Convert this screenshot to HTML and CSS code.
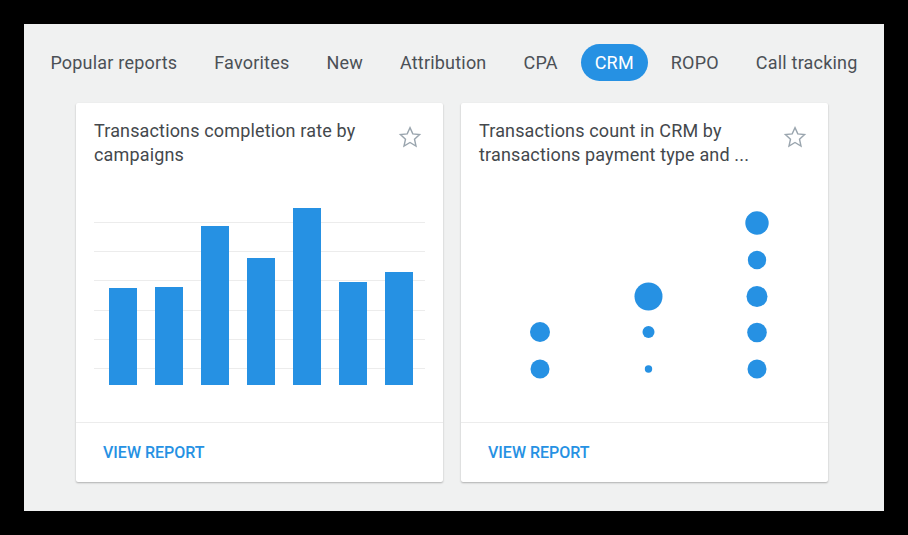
FILE: index.html
```html
<!DOCTYPE html>
<html>
<head>
<meta charset="utf-8">
<link rel="stylesheet" href="styles.css">
</head>
<body>
<div class="frame">
  <nav class="tabs">
    <span class="tab">Popular reports</span>
    <span class="tab">Favorites</span>
    <span class="tab">New</span>
    <span class="tab">Attribution</span>
    <span class="tab">CPA</span>
    <span class="tab active">CRM</span>
    <span class="tab">ROPO</span>
    <span class="tab">Call tracking</span>
  </nav>
  <div class="cards">
    <div class="card">
      <div class="card-head">
        <div class="title">Transactions completion rate by campaigns</div>
        <svg class="star" viewBox="0 0 24 24"><polygon points="12,2.6 14.8,8.9 21.6,9.6 16.5,14.2 18,21 12,17.5 6,21 7.5,14.2 2.4,9.6 9.2,8.9"/></svg>
      </div>
      <svg class="chart" viewBox="0 0 367 255">
        <g class="grid">
          <line x1="18" x2="349" y1="55.5" y2="55.5"/>
          <line x1="18" x2="349" y1="84.5" y2="84.5"/>
          <line x1="18" x2="349" y1="113.5" y2="113.5"/>
          <line x1="18" x2="349" y1="143.5" y2="143.5"/>
          <line x1="18" x2="349" y1="172.5" y2="172.5"/>
          <line x1="18" x2="349" y1="201.5" y2="201.5"/>
        </g>
        <g class="bars">
          <rect x="33" y="121" width="28" height="97"/>
          <rect x="79" y="120" width="28" height="98"/>
          <rect x="125" y="59" width="28" height="159"/>
          <rect x="171" y="91" width="28" height="127"/>
          <rect x="217" y="41" width="28" height="177"/>
          <rect x="263" y="115" width="28" height="103"/>
          <rect x="309" y="105" width="28" height="113"/>
        </g>
      </svg>
      <div class="card-foot"><span class="link">VIEW REPORT</span></div>
    </div>
    <div class="card">
      <div class="card-head">
        <div class="title">Transactions count in CRM by transactions payment type and ...</div>
        <svg class="star" viewBox="0 0 24 24"><polygon points="12,2.6 14.8,8.9 21.6,9.6 16.5,14.2 18,21 12,17.5 6,21 7.5,14.2 2.4,9.6 9.2,8.9"/></svg>
      </div>
      <svg class="chart" viewBox="0 0 367 255">
        <g class="bubbles">
          <circle cx="79" cy="165" r="10"/>
          <circle cx="79" cy="202" r="9.5"/>
          <circle cx="187.5" cy="129.5" r="14"/>
          <circle cx="187.5" cy="165" r="6"/>
          <circle cx="187.5" cy="202" r="3.7"/>
          <circle cx="296" cy="56" r="11.7"/>
          <circle cx="296" cy="93" r="9.2"/>
          <circle cx="296" cy="129.5" r="10.5"/>
          <circle cx="296" cy="165.5" r="9.8"/>
          <circle cx="296" cy="202" r="9.5"/>
        </g>
      </svg>
      <div class="card-foot"><span class="link">VIEW REPORT</span></div>
    </div>
  </div>
</div>
</body>
</html>
```
FILE: styles.css
```css
html, body {
  margin: 0;
  padding: 0;
  background: #000;
}
body {
  padding: 24px;
  font-family: Roboto, "Liberation Sans", Arial, sans-serif;
}
.frame {
  width: 860px;
  height: 487px;
  background: #f0f1f1;
  box-sizing: border-box;
  padding-top: 20px;
}
.tabs {
  display: flex;
  justify-content: center;
  gap: 9px;
  height: 37px;
}
.tab {
  padding: 0 14px;
  line-height: 37px;
  font-size: 18px;
  letter-spacing: 0.2px;
  color: #4b5056;
  border-radius: 19px;
  white-space: nowrap;
}
.tab.active {
  background: #2691e3;
  color: #fff;
}
.cards {
  display: flex;
  justify-content: center;
  gap: 18px;
  margin-top: 22px;
  padding-right: 4px;
}
.card {
  width: 367px;
  height: 379px;
  background: #fff;
  border-radius: 2px;
  box-shadow: 0 1px 2px rgba(0, 0, 0, 0.28);
  display: flex;
  flex-direction: column;
}
.card-head {
  display: flex;
  align-items: flex-start;
  padding: 16px 21px 0 18px;
  height: 64px;
  box-sizing: border-box;
}
.title {
  flex: 1;
  font-size: 18px;
  letter-spacing: 0.15px;
  line-height: 24px;
  color: #44484c;
  padding-right: 16px;
}
.star {
  width: 24px;
  height: 24px;
  margin-top: 6px;
  flex: none;
}
.star polygon {
  fill: none;
  stroke: #9aa5ae;
  stroke-width: 1.4;
  stroke-linejoin: miter;
}
.chart {
  display: block;
  width: 367px;
  height: 255px;
}
.grid line {
  stroke: #ececec;
  stroke-width: 1;
}
.bars rect, .bubbles circle {
  fill: #2691e3;
}
.card-foot {
  border-top: 1px solid #ececec;
  flex: 1;
  display: flex;
  align-items: center;
  padding-left: 27px;
}
.link {
  font-size: 16px;
  font-weight: 500;
  color: #2691e3;
  letter-spacing: 0;
}
```
